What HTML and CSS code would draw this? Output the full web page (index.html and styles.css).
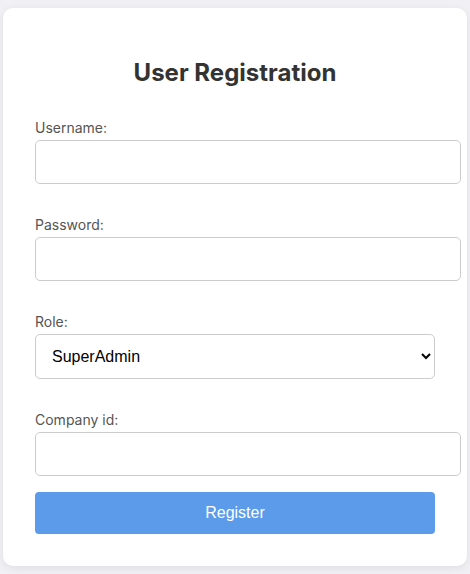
FILE: index.html
```html
<!DOCTYPE html>
<html lang="en">
<head>
<meta charset="utf-8">
<title>User Registration</title>
<link rel="stylesheet" href="styles.css">
</head>
<body>
<div class="card">
  <h2 class="title">User Registration</h2>
  <form class="form">
    <div class="field">
      <label class="label" for="username">Username:</label>
      <input class="input" id="username" type="text">
    </div>
    <div class="field">
      <label class="label" for="password">Password:</label>
      <input class="input" id="password" type="password">
    </div>
    <div class="field">
      <label class="label" for="role">Role:</label>
      <select class="select" id="role">
        <option>SuperAdmin</option>
        <option>Admin</option>
        <option>User</option>
      </select>
    </div>
    <div class="field field-last">
      <label class="label" for="company">Company id:</label>
      <input class="input" id="company" type="text">
    </div>
    <button class="button" type="button">Register</button>
  </form>
</div>
</body>
</html>
```
FILE: styles.css
```css
html, body {
  margin: 0;
  padding: 0;
}
body {
  background: #f0f0f5;
  font-family: Inter, "Liberation Sans", sans-serif;
  display: flex;
  justify-content: center;
  align-items: center;
  height: 100vh;
}
.card {
  background: #fff;
  width: 400px;
  padding: 32px;
  border-radius: 10px;
  box-shadow: 0 2px 8px rgba(0, 0, 0, 0.08);
}
.title {
  margin: 18px 0 32px;
  text-align: center;
  font-size: 24px;
  font-weight: 700;
  color: #333;
  line-height: 29px;
}
.form {
  display: flex;
  flex-direction: column;
}
.field {
  display: flex;
  flex-direction: column;
  align-items: flex-start;
  margin-bottom: 32px;
}
.field-last {
  margin-bottom: 16px;
}
.label {
  font-size: 14px;
  line-height: 17px;
  color: #555;
  margin-bottom: 4px;
}
.input {
  width: 100%;
  box-sizing: content-box;
  padding: 0 12px;
  height: 42px;
  border: 1px solid #ccc;
  border-radius: 5px;
  font-family: "Liberation Sans", Arial, sans-serif;
  font-size: 16px;
  margin: 0;
}
.select {
  width: 400px;
  height: 45px;
  padding: 0 12px;
  border: 1px solid #ccc;
  border-radius: 5px;
  background: #fff;
  color: #000;
  font-family: "Liberation Sans", Arial, sans-serif;
  font-size: 16px;
  margin: 0;
}
.button {
  width: 400px;
  height: 42px;
  border: none;
  border-radius: 4px;
  background: #5b9bea;
  color: #fff;
  font-family: "Liberation Sans", Arial, sans-serif;
  font-size: 16px;
  cursor: pointer;
}
```
